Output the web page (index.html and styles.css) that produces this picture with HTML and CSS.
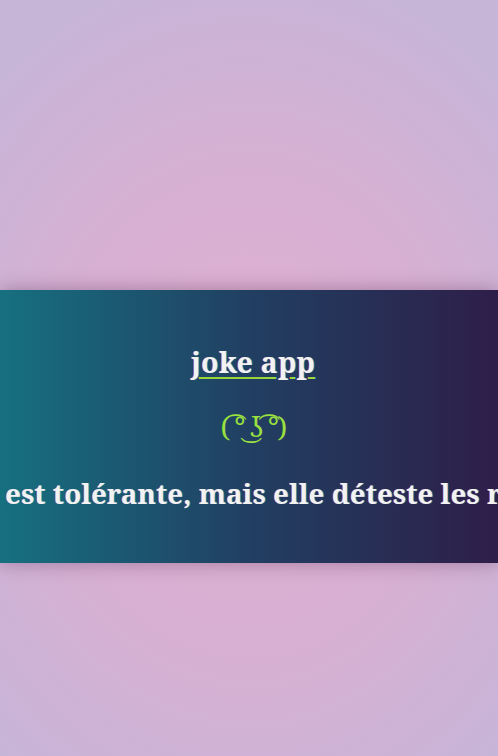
FILE: index.html
```html
<!DOCTYPE html>
<html lang="fr">
<head>
<meta charset="utf-8">
<title>joke app</title>
<link rel="stylesheet" href="styles.css">
</head>
<body>
<main class="stage">
  <section class="card">
    <h1 class="title"><span class="title-link">joke app</span></h1>
    <p class="face">( ͡° ͜ʖ ͡°)</p>
    <p class="joke">Sa mère est tolérante, mais elle déteste les racistes !</p>
  </section>
</main>
</body>
</html>
```
FILE: styles.css
```css
html, body {
  margin: 0;
  padding: 0;
  height: 100%;
}
body {
  overflow: hidden;
  background: radial-gradient(ellipse 75% 60% at 50% 55%, #e2afcf 0%, #d6b0d3 55%, #c7b5d8 100%);
  font-family: "Noto Serif", "DejaVu Serif", "Liberation Serif", serif;
}
.stage {
  padding-top: 290px;
}
.card {
  height: 273px;
  box-sizing: border-box;
  padding-top: 52px;
  background: linear-gradient(to right, #16707f 0%, #213f62 50%, #2e1e49 100%);
  box-shadow: 0 0 18px rgba(60, 20, 60, 0.35);
  display: flex;
  flex-direction: column;
  align-items: center;
  color: #f2f2f2;
}
.title {
  margin: 0;
  padding-left: 8px;
  font-size: 28.5px;
  line-height: 40px;
  font-weight: 700;
  letter-spacing: 0.2px;
  text-shadow: -1px 0 rgba(255, 40, 90, 0.45), 1px 0 rgba(0, 230, 255, 0.45);
}
.title-link {
  text-decoration: underline;
  text-decoration-color: #9ad53a;
  text-decoration-thickness: 2px;
  text-underline-offset: 4px;
}
.face {
  margin: 26px 0 0;
  padding-left: 8px;
  font-size: 28px;
  line-height: 36px;
  letter-spacing: -1.5px;
  color: #9ae03f;
  font-family: "Noto Serif", "DejaVu Serif", serif;
}
.joke {
  margin: 30px 0 0;
  white-space: nowrap;
  font-size: 27.6px;
  line-height: 38px;
  font-weight: 700;
  letter-spacing: 0.1px;
  text-shadow: -1px 0 rgba(255, 40, 90, 0.4), 1px 0 rgba(0, 230, 255, 0.4);
}
```
